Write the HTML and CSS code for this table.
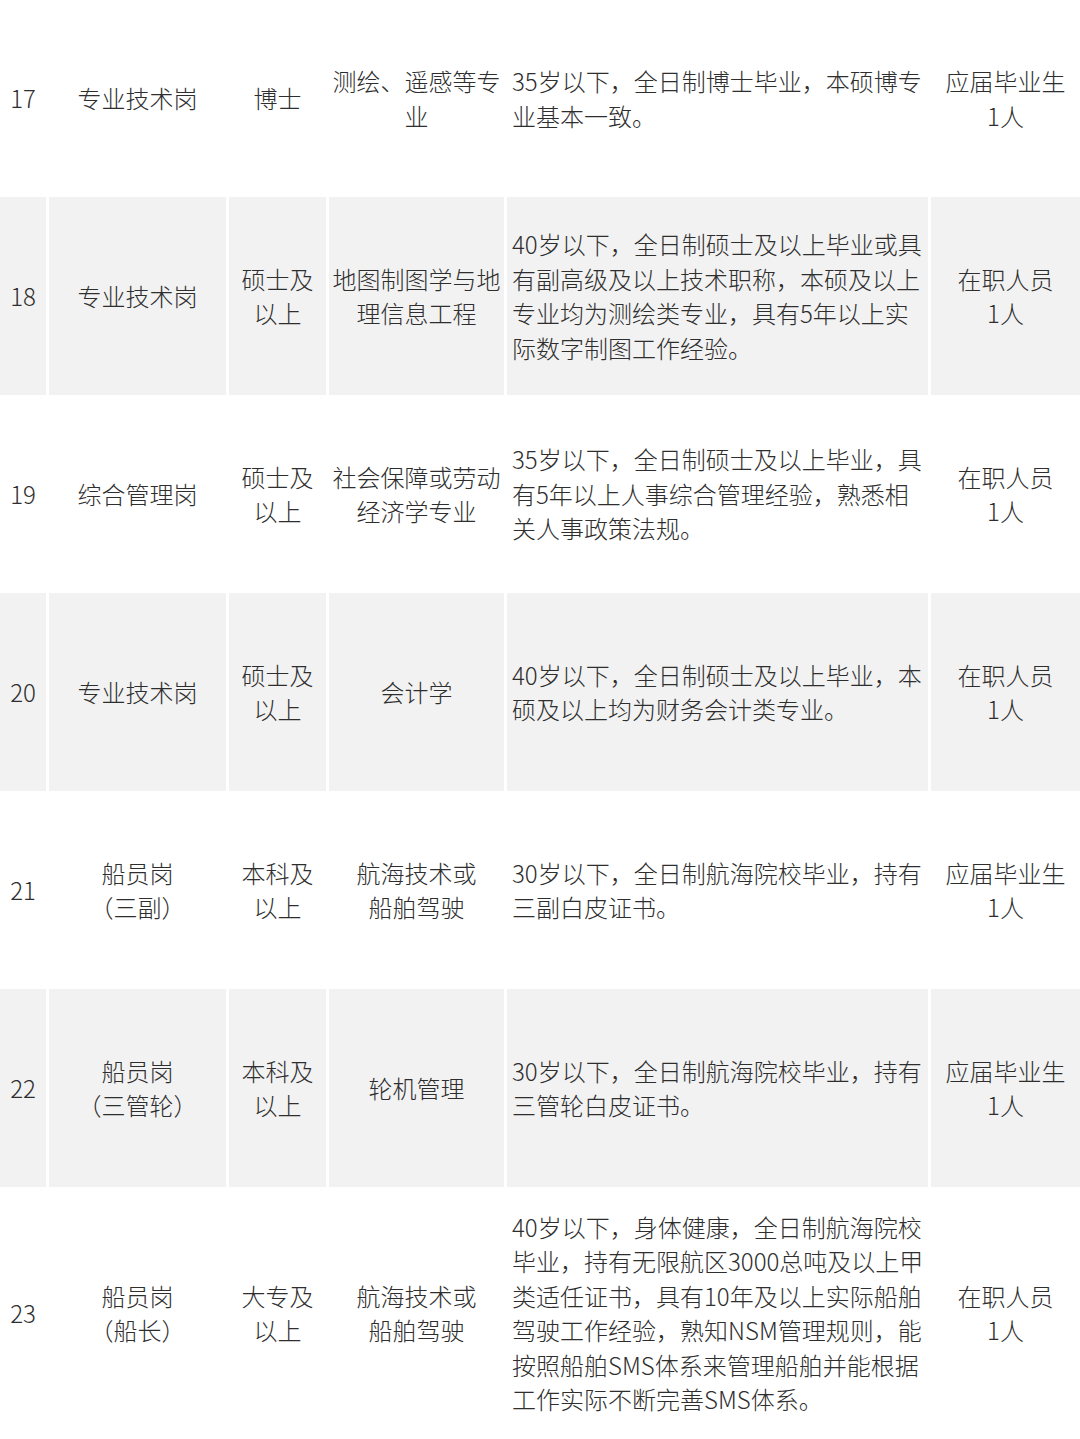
FILE: index.html
```html
<!DOCTYPE html>
<html lang="zh-CN">
<head>
<meta charset="utf-8">
<title>岗位表</title>
<link rel="stylesheet" href="styles.css">
</head>
<body>
<div class="table">
  <div class="row r-first">
    <div class="cell">17</div>
    <div class="cell">专业技术岗</div>
    <div class="cell">博士</div>
    <div class="cell">测绘、遥感等专业</div>
    <div class="cell desc"><div class="txt">35岁以下，全日制博士毕业，本硕博专业基本一致。</div></div>
    <div class="cell">应届毕业生<br>1人</div>
  </div>
  <div class="row alt">
    <div class="cell">18</div>
    <div class="cell">专业技术岗</div>
    <div class="cell">硕士及以上</div>
    <div class="cell">地图制图学与地理信息工程</div>
    <div class="cell desc"><div class="txt">40岁以下，全日制硕士及以上毕业或具有副高级及以上技术职称，本硕及以上专业均为测绘类专业，具有5年以上实际数字制图工作经验。</div></div>
    <div class="cell">在职人员<br>1人</div>
  </div>
  <div class="row">
    <div class="cell">19</div>
    <div class="cell">综合管理岗</div>
    <div class="cell">硕士及以上</div>
    <div class="cell">社会保障或劳动经济学专业</div>
    <div class="cell desc"><div class="txt">35岁以下，全日制硕士及以上毕业，具有5年以上人事综合管理经验，熟悉相关人事政策法规。</div></div>
    <div class="cell">在职人员<br>1人</div>
  </div>
  <div class="row alt">
    <div class="cell">20</div>
    <div class="cell">专业技术岗</div>
    <div class="cell">硕士及以上</div>
    <div class="cell">会计学</div>
    <div class="cell desc"><div class="txt">40岁以下，全日制硕士及以上毕业，本硕及以上均为财务会计类专业。</div></div>
    <div class="cell">在职人员<br>1人</div>
  </div>
  <div class="row">
    <div class="cell">21</div>
    <div class="cell">船员岗<br>（三副）</div>
    <div class="cell">本科及以上</div>
    <div class="cell">航海技术或<br>船舶驾驶</div>
    <div class="cell desc"><div class="txt">30岁以下，全日制航海院校毕业，持有三副白皮证书。</div></div>
    <div class="cell">应届毕业生<br>1人</div>
  </div>
  <div class="row alt">
    <div class="cell">22</div>
    <div class="cell">船员岗<br>（三管轮）</div>
    <div class="cell">本科及以上</div>
    <div class="cell">轮机管理</div>
    <div class="cell desc"><div class="txt">30岁以下，全日制航海院校毕业，持有三管轮白皮证书。</div></div>
    <div class="cell">应届毕业生<br>1人</div>
  </div>
  <div class="row r-last">
    <div class="cell">23</div>
    <div class="cell">船员岗<br>（船长）</div>
    <div class="cell">大专及以上</div>
    <div class="cell">航海技术或<br>船舶驾驶</div>
    <div class="cell desc"><div class="txt">40岁以下，身体健康，全日制航海院校毕业，持有无限航区3000总吨及以上甲类适任证书，具有10年及以上实际船舶驾驶工作经验，熟知NSM管理规则，能按照船舶SMS体系来管理船舶并能根据工作实际不断完善SMS体系。</div></div>
    <div class="cell">在职人员<br>1人</div>
  </div>
</div>
</body>
</html>
```
FILE: styles.css
```css
html, body {
  margin: 0;
  padding: 0;
  background: #ffffff;
}
body {
  width: 1080px;
  font-family: "Noto Sans CJK SC", "Noto Sans", sans-serif;
  font-size: 24px;
  font-weight: 300;
  line-height: 34.5px;
  color: #2e2e2e;
}
.table {
  display: flex;
  flex-direction: column;
}
.row {
  display: grid;
  grid-template-columns: 46px 177px 97px 175px 421px 149px;
  column-gap: 3px;
  height: 198px;
}
.row.r-first {
  height: 197px;
}
.row.r-last {
  height: 252px;
}
.cell {
  display: flex;
  align-items: center;
  justify-content: center;
  text-align: center;
  padding: 0 3px;
  box-sizing: border-box;
}
.row.alt .cell {
  background: #f2f2f2;
}
.cell.desc {
  justify-content: flex-start;
  text-align: left;
  padding: 0 0 0 5px;
}
.txt {
  width: 100%;
}
```
